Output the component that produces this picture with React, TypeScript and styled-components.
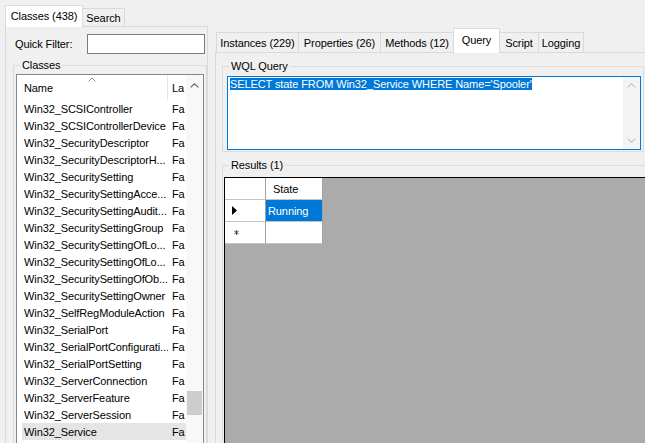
import React from 'react';
import styled, { createGlobalStyle } from 'styled-components';

const GlobalStyle = createGlobalStyle`
  html, body {
    margin: 0;
    padding: 0;
    background: #f0f0f0;
    overflow: hidden;
  }
  body {
    font-family: 'Liberation Sans', Arial, sans-serif;
    font-size: 11px;
    letter-spacing: -0.1px;
    color: #000;
  }
  * {
    box-sizing: border-box;
  }
`;

const Window = styled.div`
  display: flex;
  width: 645px;
  height: 443px;
  overflow: hidden;
  background: #f0f0f0;
`;

const Pane = styled.div<{ $width: number; $top: number; $left: number }>`
  display: flex;
  flex-direction: column;
  flex: 0 0 ${(p) => p.$width}px;
  padding-top: ${(p) => p.$top}px;
  margin-left: ${(p) => p.$left}px;
`;

const TabStrip = styled.div<{ $height: number; $inset: number }>`
  display: flex;
  align-items: flex-end;
  height: ${(p) => p.$height}px;
  padding-left: ${(p) => p.$inset}px;
  position: relative;
  z-index: 1;
`;

const Tab = styled.div<{ $active: boolean; $w: number; $h: number }>`
  display: flex;
  align-items: center;
  justify-content: center;
  width: ${(p) => p.$w}px;
  height: ${(p) => p.$h}px;
  margin-right: -1px;
  margin-bottom: ${(p) => (p.$active ? -1 : 0)}px;
  padding-bottom: ${(p) => (p.$active ? 2 : 0)}px;
  background: ${(p) => (p.$active ? '#ffffff' : '#f0f0f0')};
  border: 1px solid #d9d9d9;
  border-bottom: none;
  white-space: nowrap;
  position: relative;
  z-index: ${(p) => (p.$active ? 2 : 1)};
`;

const TabPage = styled.div`
  flex: 1;
  display: flex;
  flex-direction: column;
  background: #f0f0f0;
  border: 1px solid #d9d9d9;
  border-bottom: none;
`;

const FilterRow = styled.div`
  display: flex;
  align-items: center;
  padding: 7px 2px 0 9px;
`;

const FilterInput = styled.div`
  margin-left: auto;
  width: 118px;
  height: 20px;
  background: #fff;
  border: 1px solid #7a7a7a;
`;

const GroupBox = styled.fieldset<{ $top: number; $left: number; $width?: number }>`
  margin: ${(p) => p.$top}px 0 0 ${(p) => p.$left}px;
  padding: 0;
  min-width: 0;
  border: 1px solid #dcdcdc;
  flex: 0 0 auto;
  ${(p) => (p.$width ? `width: ${p.$width}px;` : '')}
`;

const Legend = styled.legend`
  margin-left: 6px;
  padding: 0 2px;
  font-size: 11px;
  line-height: 13px;
`;

const GroupInner = styled.div<{ $pad: string }>`
  padding: ${(p) => p.$pad};
  display: flex;
  flex-direction: column;
`;

/* ---------- class list ---------- */

const ListView = styled.div`
  display: flex;
  height: 380px;
  background: #fff;
  border: 1px solid #828790;
`;

const ListBody = styled.div`
  flex: 1;
  display: flex;
  flex-direction: column;
  min-width: 0;
`;

const ListHeader = styled.div`
  display: flex;
  height: 25px;
  align-items: stretch;
`;

const HeaderCell = styled.div<{ $w: number; $pad: number; $divider?: boolean }>`
  position: relative;
  display: flex;
  align-items: center;
  width: ${(p) => p.$w}px;
  flex: 0 0 ${(p) => p.$w}px;
  padding-left: ${(p) => p.$pad}px;
  overflow: hidden;
  white-space: nowrap;
  border-right: ${(p) => (p.$divider ? '1px solid #e5e5e5' : 'none')};
`;

const SortGlyph = styled.svg`
  position: absolute;
  top: 2px;
  left: 50%;
  transform: translateX(-50%);
`;

const ListRow = styled.div<{ $selected?: boolean }>`
  display: flex;
  align-items: center;
  height: 17px;
  margin-left: 5px;
  background: ${(p) => (p.$selected ? '#e5e5e5' : 'transparent')};
`;

const RowCell = styled.div<{ $w: number; $pad: number }>`
  flex: 0 0 ${(p) => p.$w}px;
  width: ${(p) => p.$w}px;
  padding-left: ${(p) => p.$pad}px;
  overflow: hidden;
  white-space: nowrap;
`;

const VScroll = styled.div`
  flex: 0 0 17px;
  display: flex;
  flex-direction: column;
  background: #f8f8f8;
`;

const ScrollButton = styled.div<{ $h: number }>`
  height: ${(p) => p.$h}px;
  flex: 0 0 auto;
  display: flex;
  align-items: center;
  justify-content: center;
`;

const Thumb = styled.div<{ $offset: number }>`
  margin: ${(p) => p.$offset}px 1px 0;
  height: 24px;
  background: #cdcdcd;
`;

/* ---------- query editor ---------- */

const QueryBox = styled.div`
  display: flex;
  height: 74px;
  background: #fff;
  border: 1px solid #0078d7;
`;

const QueryText = styled.div`
  flex: 1;
  padding: 1px 2px;
  line-height: 13px;
  white-space: pre;
`;

const Selection = styled.span`
  background: #0078d7;
  color: #fff;
`;

const EditScroll = styled.div`
  flex: 0 0 17px;
  display: flex;
  flex-direction: column;
  justify-content: space-between;
  background: #f4f4f4;
`;

/* ---------- results grid ---------- */

const DataGrid = styled.div`
  display: grid;
  grid-template-columns: 41px 57px;
  grid-auto-rows: 22px;
  align-content: start;
  height: 300px;
  background: #ababab;
  border: 1px solid #000;
  border-right: none;
`;

const GridCell = styled.div<{ $selected?: boolean; $pad: number }>`
  display: flex;
  align-items: center;
  padding-left: ${(p) => p.$pad}px;
  background: ${(p) => (p.$selected ? '#0078d7' : '#fff')};
  color: ${(p) => (p.$selected ? '#fff' : '#000')};
  border-right: 1px solid #a0a0a0;
  border-bottom: 1px solid #c4c4c4;
`;

const ChevronUp = ({ color }: { color: string }) => (
  <svg width="9" height="5" viewBox="0 0 9 5">
    <path d="M0.6 4.4 L4.5 0.8 L8.4 4.4" fill="none" stroke={color} strokeWidth="1.1" />
  </svg>
);

const ChevronDown = ({ color }: { color: string }) => (
  <svg width="9" height="5" viewBox="0 0 9 5">
    <path d="M0.6 0.6 L4.5 4.2 L8.4 0.6" fill="none" stroke={color} strokeWidth="1.1" />
  </svg>
);

const leftTabs = [
  { label: 'Classes (438)', w: 78, active: true },
  { label: 'Search', w: 43, active: false },
];

const rightTabs = [
  { label: 'Instances (229)', w: 83, active: false },
  { label: 'Properties (26)', w: 83, active: false },
  { label: 'Methods (12)', w: 74, active: false },
  { label: 'Query', w: 47, active: true },
  { label: 'Script', w: 40, active: false },
  { label: 'Logging', w: 46, active: false },
];

const classes = [
  'Win32_SCSIController',
  'Win32_SCSIControllerDevice',
  'Win32_SecurityDescriptor',
  'Win32_SecurityDescriptorH...',
  'Win32_SecuritySetting',
  'Win32_SecuritySettingAcce...',
  'Win32_SecuritySettingAudit...',
  'Win32_SecuritySettingGroup',
  'Win32_SecuritySettingOfLo...',
  'Win32_SecuritySettingOfLo...',
  'Win32_SecuritySettingOfOb...',
  'Win32_SecuritySettingOwner',
  'Win32_SelfRegModuleAction',
  'Win32_SerialPort',
  'Win32_SerialPortConfigurati...',
  'Win32_SerialPortSetting',
  'Win32_ServerConnection',
  'Win32_ServerFeature',
  'Win32_ServerSession',
  'Win32_Service',
];

const App: React.FunctionComponent = () => {
  return (
    <>
      <GlobalStyle />
      <Window>
        <Pane $width={203} $top={5} $left={5}>
          <TabStrip $height={21} $inset={0}>
            {leftTabs.map((t) => (
              <Tab key={t.label} $active={t.active} $w={t.w} $h={t.active ? 22 : 18}>
                {t.label}
              </Tab>
            ))}
          </TabStrip>
          <TabPage>
            <FilterRow>
              <span>Quick Filter:</span>
              <FilterInput />
            </FilterRow>
            <GroupBox $top={5} $left={7}>
              <Legend>Classes</Legend>
              <GroupInner $pad="2px 2px 0 2px">
                <ListView>
                  <ListBody>
                    <ListHeader>
                      <HeaderCell $w={151} $pad={7} $divider>
                        <SortGlyph width="8" height="5" viewBox="0 0 8 5">
                          <path d="M0.5 4.5 L4 1 L7.5 4.5" fill="none" stroke="#9a9a9a" strokeWidth="1" />
                        </SortGlyph>
                        Name
                      </HeaderCell>
                      <HeaderCell $w={17} $pad={4}>
                        La
                      </HeaderCell>
                    </ListHeader>
                    {classes.map((name, i) => (
                      <ListRow key={i} $selected={name === 'Win32_Service'}>
                        <RowCell $w={146} $pad={2}>
                          {name}
                        </RowCell>
                        <RowCell $w={17} $pad={4}>
                          Fa
                        </RowCell>
                      </ListRow>
                    ))}
                  </ListBody>
                  <VScroll>
                    <ScrollButton $h={20}>
                      <ChevronUp color="#606060" />
                    </ScrollButton>
                    <Thumb $offset={296} />
                  </VScroll>
                </ListView>
              </GroupInner>
            </GroupBox>
          </TabPage>
        </Pane>

        <Pane $width={460} $top={28} $left={7}>
          <TabStrip $height={24} $inset={1}>
            {rightTabs.map((t) => (
              <Tab key={t.label} $active={t.active} $w={t.w} $h={t.active ? 25 : 20}>
                {t.label}
              </Tab>
            ))}
          </TabStrip>
          <TabPage>
            <GroupBox $top={7} $left={6} $width={422}>
              <Legend>WQL Query</Legend>
              <GroupInner $pad="3px 2px 1px 4px">
                <QueryBox>
                  <QueryText>
                    <Selection>SELECT state FROM Win32_Service WHERE Name='Spooler'</Selection>
                  </QueryText>
                  <EditScroll>
                    <ScrollButton $h={17}>
                      <ChevronUp color="#c2c2c2" />
                    </ScrollButton>
                    <ScrollButton $h={17}>
                      <ChevronDown color="#c2c2c2" />
                    </ScrollButton>
                  </EditScroll>
                </QueryBox>
              </GroupInner>
            </GroupBox>
            <GroupBox $top={7} $left={6} $width={440}>
              <Legend>Results (1)</Legend>
              <GroupInner $pad="5px 0 0 1px">
                <DataGrid>
                  <GridCell $pad={0} />
                  <GridCell $pad={7}>State</GridCell>
                  <GridCell $pad={7}>
                    <svg width="5" height="9" viewBox="0 0 5 9">
                      <polygon points="0,0 5,4.5 0,9" fill="#000" />
                    </svg>
                  </GridCell>
                  <GridCell $pad={2} $selected>
                    Running
                  </GridCell>
                  <GridCell $pad={9}>
                    <svg width="5" height="5" viewBox="0 0 5 5">
                      <path d="M2.5 0 V5 M0.3 1.2 L4.7 3.8 M0.3 3.8 L4.7 1.2" stroke="#505050" strokeWidth="1" />
                    </svg>
                  </GridCell>
                  <GridCell $pad={2} />
                </DataGrid>
              </GroupInner>
            </GroupBox>
          </TabPage>
        </Pane>
      </Window>
    </>
  );
};

export default App;
